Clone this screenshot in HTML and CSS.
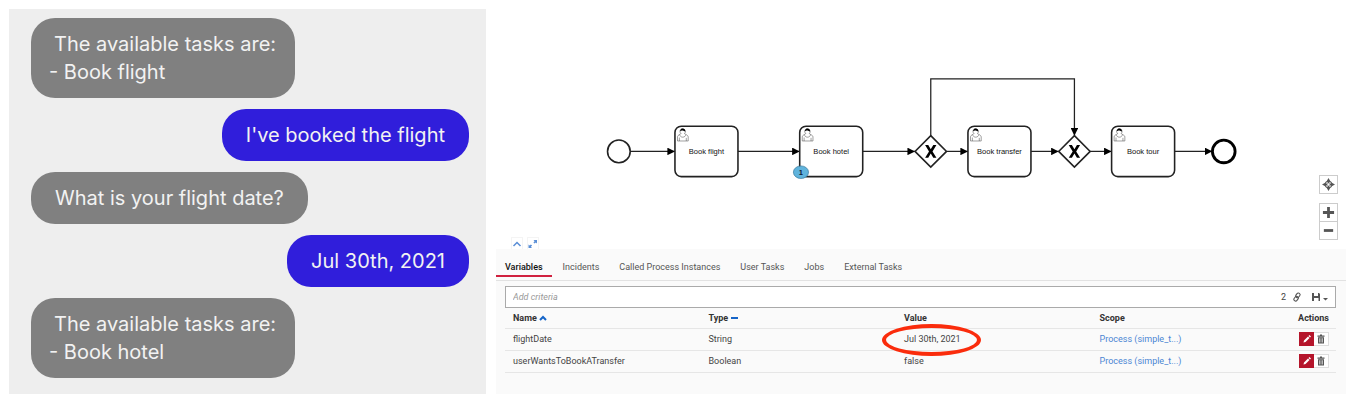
FILE: index.html
```html
<!DOCTYPE html>
<html lang="en">
<head>
<meta charset="utf-8">
<title>Process chat</title>
<link rel="stylesheet" href="styles.css">
</head>
<body>
<main class="page">
  <section class="chat" aria-label="Chat">
    <p class="bubble bot list">The available tasks are:<br>- Book flight</p>
    <p class="bubble user">I've booked the flight</p>
    <p class="bubble bot">What is your flight date?</p>
    <p class="bubble user">Jul 30th, 2021</p>
    <p class="bubble bot list">The available tasks are:<br>- Book hotel</p>
  </section>

  <section class="cockpit" aria-label="Process instance">
    <div class="canvas">
      <svg class="diagram" viewBox="0 0 1349 381" role="img" aria-label="Process diagram">
        <defs>
          <marker id="tip" viewBox="0 0 12 12" refX="12" refY="6" markerWidth="12" markerHeight="12" markerUnits="userSpaceOnUse" orient="auto">
            <path d="M0 0 12 6 0 12Z"/>
          </marker>
          <g id="task">
            <rect class="shape" width="100" height="80" rx="10"/>
            <path class="person" d="m15,12 c0.909,-0.845 1.594,-2.049 1.594,-3.385 0,-2.554 -1.805,-4.622 -4.357,-4.622 -2.552,0 -4.288,2.068 -4.288,4.622 0,1.348 0.974,2.562 1.896,3.405 -0.529,0.187 -5.669,2.097 -5.794,4.756 v6.718 h17 v-6.718 c0,-2.298 -5.528,-4.595 -6.051,-4.776zm-8,6 l0,5.5 m11,0 l0,-5"/>
            <path class="person" d="m17.162,13.009 c0,2.447 -2.158,4.431 -4.821,4.431 -2.665,0 -4.822,-1.981 -4.822,-4.431"/>
            <path class="hair" d="m8.1,8.2 c0,0 2.251,-2.358 4.274,-1.177 2.024,1.181 4.221,1.537 4.124,0.965 -0.098,-0.57 -0.117,-3.791 -4.191,-4.136 -3.572,-0.001 -4.208,3.67 -4.207,4.348z"/>
          </g>
          <g id="gateway">
            <path class="shape" d="M0-25 25 0 0 25-25 0Z"/>
            <path class="cross" d="M-9-10h5L0-3.500 4-10h5L2.800 0 9 10H4L0 3.500-4 10h-5L-2.800 0Z"/>
          </g>
        </defs>
        <g class="flows">
          <path d="M213 226H284"/>
          <path d="M384 226H482"/>
          <path d="M582 226H665"/>
          <path d="M715 226H749"/>
          <path d="M849 226H893"/>
          <path d="M943 226H977"/>
          <path d="M1077 226H1137"/>
          <path d="M690 201V111H918V201"/>
        </g>
        <circle class="shape" cx="195" cy="226" r="18"/>
        <use href="#task" x="284" y="186"/>
        <use href="#task" x="482" y="186"/>
        <use href="#gateway" x="690" y="226"/>
        <use href="#task" x="749" y="186"/>
        <use href="#gateway" x="918" y="226"/>
        <use href="#task" x="977" y="186"/>
        <circle class="shape end" cx="1155" cy="226" r="18"/>
        <g class="labels">
          <text x="334" y="230">Book flight</text>
          <text x="532" y="230">Book hotel</text>
          <text x="799" y="230">Book transfer</text>
          <text x="1027" y="230">Book tour</text>
        </g>
        <ellipse class="token" cx="484" cy="259" rx="12" ry="10"/>
        <text class="count" x="484" y="263">1</text>
      </svg>
      <div class="zoom">
        <button type="button" aria-label="Reset view">
          <svg viewBox="0 0 14 14"><path d="M7 0 9 3.500H8V6H6V3.500H5ZM7 14 5 10.500h1V8h2v2.500h1ZM0 7 3.500 5v1H6v2H3.500v1ZM14 7 10.500 9V8H8V6h2.500V5Z"/><circle class="line thin" cx="7" cy="7" r="3.500"/><circle class="hub" cx="7" cy="7" r="1"/></svg>
        </button>
        <div class="steps">
          <button type="button" aria-label="Zoom in"><svg viewBox="0 0 14 14"><path d="M5.500 1h3v4.500H13v3H8.500V13h-3V8.500H1v-3h4.500Z"/></svg></button>
          <button type="button" aria-label="Zoom out"><svg viewBox="0 0 14 14"><path d="M2 5.500h10v3H2Z"/></svg></button>
        </div>
      </div>
      <div class="resize">
        <button type="button" aria-label="Collapse"><svg viewBox="0 0 12 12"><path class="line" d="M2.500 8 6 4.500 9.500 8"/></svg></button>
        <button type="button" aria-label="Maximize"><svg viewBox="0 0 12 12"><path d="M6.500 2H10v3.500L8.800 4.400 7.600 5.600 6.400 4.400 7.600 3.200ZM1.500 6.500 2.700 7.600 3.900 6.400 5.100 7.600 3.900 8.800 5 10H1.500Z"/></svg></button>
      </div>
    </div>

    <div class="details">
      <nav class="tabs" aria-label="Details">
        <a class="tab active" href="#variables">Variables</a>
        <a class="tab" href="#incidents">Incidents</a>
        <a class="tab" href="#called">Called Process Instances</a>
        <a class="tab" href="#tasks">User Tasks</a>
        <a class="tab" href="#jobs">Jobs</a>
        <a class="tab" href="#external">External Tasks</a>
      </nav>
      <div class="content" id="variables">
        <div class="search">
          <input type="text" placeholder="Add criteria" aria-label="Add criteria">
          <span class="total">2</span>
          <button type="button" aria-label="Copy link"><svg viewBox="0 0 10 10"><g class="line thin"><rect x="4.200" y="0.800" width="3.400" height="5" rx="1.700" transform="rotate(38 5.900 3.300)"/><rect x="2.400" y="4.200" width="3.400" height="5" rx="1.700" transform="rotate(38 4.100 6.700)"/></g></svg></button>
          <button type="button" class="save" aria-label="Saved searches"><svg viewBox="0 0 18 10"><path d="M1 1h2v3h4V1h1l1 1v7H7.500V6H3v3H1ZM12 6h5l-2.500 2.500Z"/></svg></button>
        </div>
        <table class="vars">
          <thead>
            <tr>
              <th>Name <svg class="sort" viewBox="0 0 8 8"><path class="line thick" d="M1 6 4 3 7 6"/></svg></th>
              <th>Type <svg class="sort" viewBox="0 0 8 8"><path d="M1 3h7v2H1Z"/></svg></th>
              <th>Value</th>
              <th>Scope</th>
              <th class="actions">Actions</th>
            </tr>
          </thead>
          <tbody>
            <tr>
              <td>flightDate</td>
              <td>String</td>
              <td class="marked">Jul 30th, 2021</td>
              <td><a href="#scope">Process (simple_t...)</a></td>
              <td class="actions"><div class="group">
                <button type="button" class="edit" aria-label="Edit"><svg viewBox="0 0 10 10"><path d="M1.500 8.500 2 6.500 6 2.500 7.500 4 3.500 8ZM6.500 2 7.500 1 9 2.500 8 3.500Z"/></svg></button>
                <button type="button" class="remove" aria-label="Delete"><svg viewBox="0 0 10 10"><path d="M4 .5h2v1h2.500v1.200h-7V1.500H4ZM2 3.200h6v6.300H2ZM3.400 4.200v4.300h.6V4.200ZM4.700 4.200v4.300h.6V4.200ZM6 4.200v4.300h.6V4.200Z" fill-rule="evenodd"/></svg></button>
              </div></td>
            </tr>
            <tr>
              <td>userWantsToBookATransfer</td>
              <td>Boolean</td>
              <td>false</td>
              <td><a href="#scope">Process (simple_t...)</a></td>
              <td class="actions"><div class="group">
                <button type="button" class="edit" aria-label="Edit"><svg viewBox="0 0 10 10"><path d="M1.500 8.500 2 6.500 6 2.500 7.500 4 3.500 8ZM6.500 2 7.500 1 9 2.500 8 3.500Z"/></svg></button>
                <button type="button" class="remove" aria-label="Delete"><svg viewBox="0 0 10 10"><path d="M4 .5h2v1h2.500v1.200h-7V1.500H4ZM2 3.200h6v6.300H2ZM3.400 4.200v4.300h.6V4.200ZM4.700 4.200v4.300h.6V4.200ZM6 4.200v4.300h.6V4.200Z" fill-rule="evenodd"/></svg></button>
              </div></td>
            </tr>
          </tbody>
        </table>
      </div>
    </div>
  </section>
</main>
</body>
</html>
```
FILE: styles.css
```css
*, *::after { box-sizing: border-box; }

body {
  margin: 0;
  background: #fff;
  font-family: Roboto, "Noto Sans", sans-serif;
}

button {
  display: flex;
  align-items: center;
  justify-content: center;
  padding: 0;
  border: 0;
  background: none;
  color: #555;
}

svg { fill: currentColor; }

.line {
  fill: none;
  stroke: currentColor;
  stroke-width: 1.5;
}

.thin { stroke-width: 1.1; }
.thick { stroke-width: 2; }
.hub { fill: #fff; }

.page {
  display: grid;
  grid-template-columns: 477fr 850fr;
  gap: 10px;
  padding: 9px;
}

/* Chat */
.chat {
  display: flex;
  flex-direction: column;
  align-items: flex-start;
  gap: 11px;
  padding: 9px 17px 15px 22px;
  background: #eee;
  font-family: Inter, sans-serif;
  font-size: 20px;
  line-height: 28px;
}

.bubble {
  margin: 0;
  padding: 12px 24px;
  border-radius: 24px;
  color: #f2f2f2;
}

.bot { background: #808080; }

.list {
  padding: 12px 19px 12px 18px;
  text-indent: 5px;
}

.user {
  align-self: flex-end;
  background: #301edb;
}

/* Diagram */
.canvas { position: relative; }

.diagram {
  display: block;
  width: 100%;
}

.shape {
  fill: #fff;
  stroke: #222;
  stroke-width: 2.5;
}

.end {
  stroke: #000;
  stroke-width: 4.5;
}

.person {
  fill: #fff;
  stroke: #444;
  stroke-width: 0.8;
}

.hair, .cross { fill: #000; }

.flows path {
  fill: none;
  stroke: #222;
  stroke-width: 2;
  marker-end: url(#tip);
}

.labels, .count {
  font-family: "Liberation Sans", Arial, sans-serif;
  font-size: 12px;
  text-anchor: middle;
  fill: #111;
}

.token {
  fill: #5fb3dc;
  stroke: #2f6f93;
}

.count { font-weight: bold; fill: #123; }

.zoom {
  position: absolute;
  right: 8px;
  bottom: 9px;
  display: grid;
  gap: 9px;
}

.zoom button {
  width: 19px;
  height: 19px;
  border: 1px solid #ccc;
  background: #fff;
}

.zoom svg { width: 13px; }

.steps button + button {
  height: 18px;
  border-top: 0;
}

.resize {
  position: absolute;
  left: 15px;
  bottom: 0;
  display: flex;
  gap: 4px;
}

.resize button {
  width: 12px;
  height: 12px;
  border: 1px solid #f4f4f4;
  border-bottom: 0;
  color: #5b8fd6;
}

.resize svg { width: 12px; flex: none; }

/* Details */
.details {
  background: #fafafa;
  color: #444;
  font-size: 9px;
  line-height: 12px;
}

.tabs {
  display: flex;
  gap: 2px;
  height: 32px;
  border-bottom: 1px solid #e2e2e2;
}

.tab {
  height: 28px;
  padding: 12px 9px 0;
  border-bottom: 2px solid transparent;
  color: #555;
  text-decoration: none;
}

.active {
  border-color: #d0213f;
  color: #111;
  font-weight: 500;
}

.content { padding: 5px 10px 21px 9px; }

.search {
  display: flex;
  align-items: center;
  gap: 6px;
  height: 22px;
  padding: 0 6px 0 7px;
  border: 1px solid #aaa;
  background: #fff;
}

.search input {
  flex: 1;
  min-width: 0;
  padding: 0;
  border: 0;
  outline: 0;
  background: none;
  font: inherit;
}

.search input::placeholder {
  color: #999;
  font-style: italic;
}

.search svg { height: 10px; }

.save { margin-left: 3px; }

.vars {
  width: 100%;
  border-collapse: collapse;
  table-layout: fixed;
}

.vars th, .vars td {
  width: 24%;
  height: 22px;
  padding: 0 8px;
  border-bottom: 1px solid #e6e6e6;
  text-align: left;
}

.vars th { height: 20px; color: #333; }

.vars .actions {
  width: 6%;
  padding: 0 7px 0 0;
  text-align: right;
}

.vars a {
  color: #4a86d4;
  text-decoration: none;
}

.sort {
  width: 8px;
  height: 8px;
  color: #1665c8;
  vertical-align: -1px;
}

.group {
  display: flex;
  justify-content: flex-end;
}

.group button {
  width: 15px;
  height: 14px;
}

.group svg { width: 10px; }

.group .edit {
  background: #b5152b;
  color: #fff;
}

.group .remove {
  border: 1px solid #ddd;
  border-left: 0;
  background: #fff;
}

.marked { position: relative; }

/* Hand-drawn ring around the value */
.marked::after {
  content: "";
  position: absolute;
  left: -14px;
  top: -5px;
  width: 99px;
  height: 32px;
  border: 4px solid #fa2c0c;
  border-radius: 50%;
}
```
